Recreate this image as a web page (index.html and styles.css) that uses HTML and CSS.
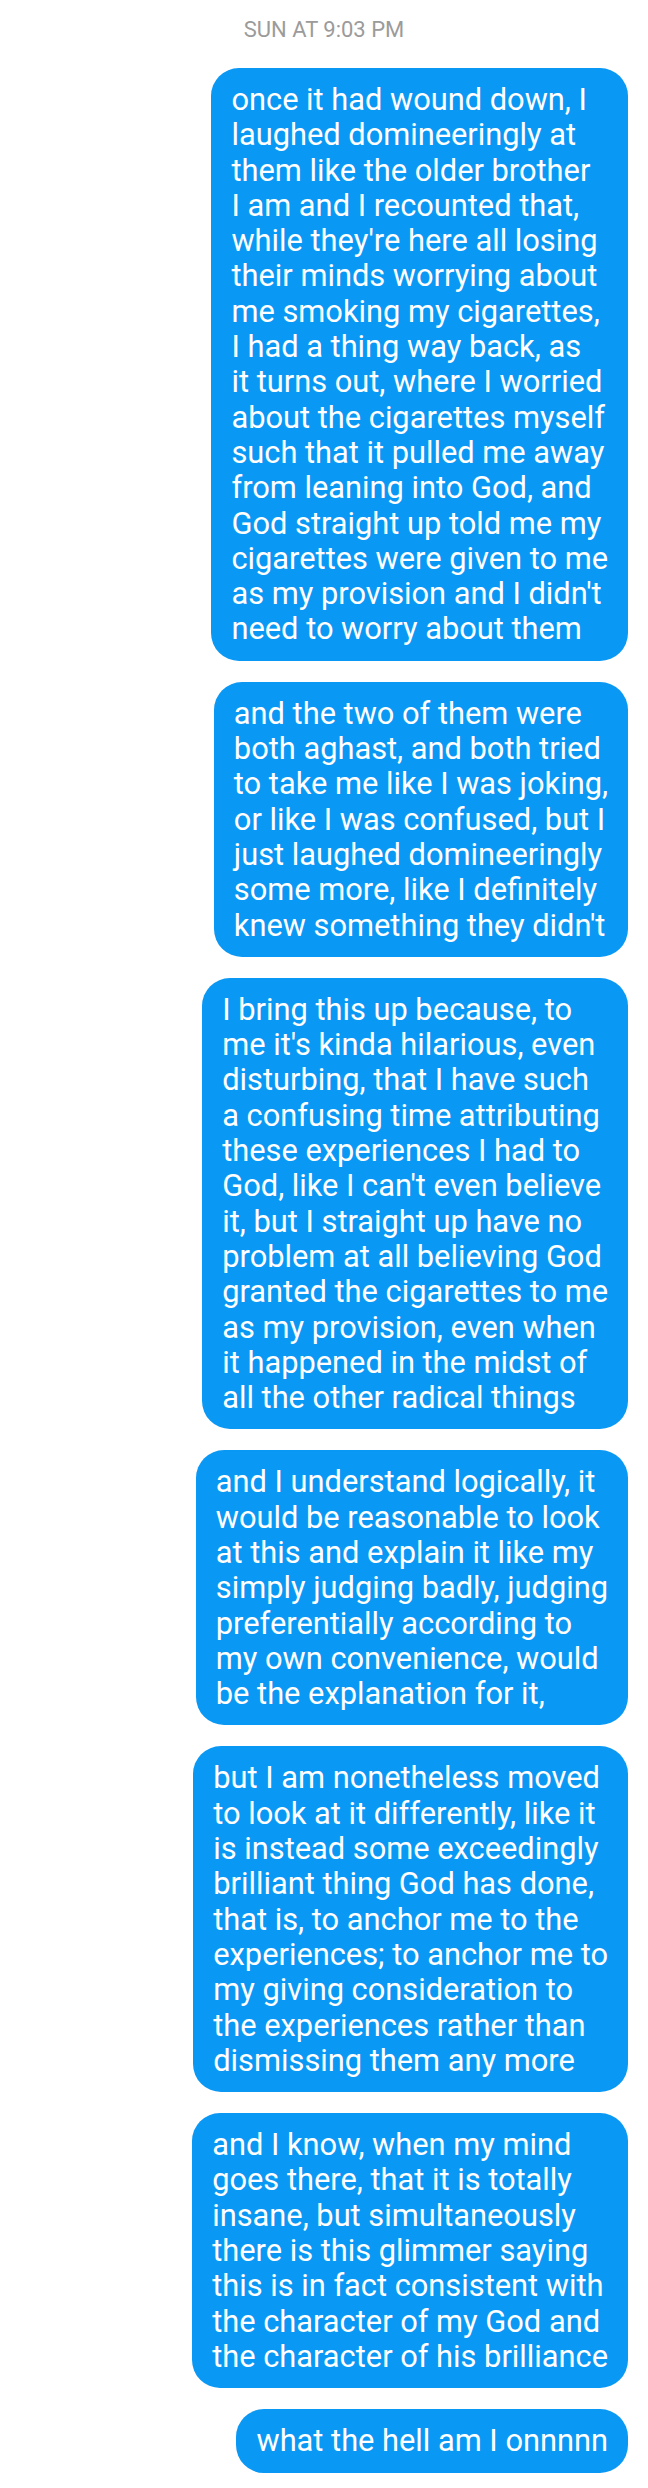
FILE: index.html
```html
<!DOCTYPE html>
<html lang="en">
<head>
<meta charset="utf-8">
<title>Messages</title>
<link rel="stylesheet" href="styles.css">
</head>
<body>
<main class="thread">
  <div class="timestamp">SUN AT 9:03 PM</div>
  <div class="messages">
    <div class="bubble">once it had wound down, I<br>laughed domineeringly at<br>them like the older brother<br>I am and I recounted that,<br>while they're here all losing<br>their minds worrying about<br>me smoking my cigarettes,<br>I had a thing way back, as<br>it turns out, where I worried<br>about the cigarettes myself<br>such that it pulled me away<br>from leaning into God, and<br>God straight up told me my<br>cigarettes were given to me<br>as my provision and I didn't<br>need to worry about them</div>
    <div class="bubble">and the two of them were<br>both aghast, and both tried<br>to take me like I was joking,<br>or like I was confused, but I<br>just laughed domineeringly<br>some more, like I definitely<br>knew something they didn't</div>
    <div class="bubble">I bring this up because, to<br>me it's kinda hilarious, even<br>disturbing, that I have such<br>a confusing time attributing<br>these experiences I had to<br>God, like I can't even believe<br>it, but I straight up have no<br>problem at all believing God<br>granted the cigarettes to me<br>as my provision, even when<br>it happened in the midst of<br>all the other radical things</div>
    <div class="bubble">and I understand logically, it<br>would be reasonable to look<br>at this and explain it like my<br>simply judging badly, judging<br>preferentially according to<br>my own convenience, would<br>be the explanation for it,</div>
    <div class="bubble">but I am nonetheless moved<br>to look at it differently, like it<br>is instead some exceedingly<br>brilliant thing God has done,<br>that is, to anchor me to the<br>experiences; to anchor me to<br>my giving consideration to<br>the experiences rather than<br>dismissing them any more</div>
    <div class="bubble">and I know, when my mind<br>goes there, that it is totally<br>insane, but simultaneously<br>there is this glimmer saying<br>this is in fact consistent with<br>the character of my God and<br>the character of his brilliance</div>
    <div class="bubble">what the hell am I onnnnn</div>
  </div>
</main>
</body>
</html>
```

FILE: styles.css
```css
html, body {
  margin: 0;
  padding: 0;
  background: #ffffff;
}

body {
  font-family: Roboto, "Noto Sans", "Liberation Sans", sans-serif;
  -webkit-font-smoothing: antialiased;
}

.thread {
  display: flex;
  flex-direction: column;
  padding: 17px 20px 16px 20px;
}

.timestamp {
  align-self: center;
  font-size: 22px;
  line-height: 26px;
  color: #9b9b9b;
  margin-bottom: 25px;
}

.messages {
  display: flex;
  flex-direction: column;
  align-items: flex-end;
  gap: 21px;
}

.bubble {
  background: #0a98f5;
  color: #ffffff;
  font-size: 30.8px;
  line-height: 35.3px;
  padding: 14px 20px;
  border-radius: 28px;
  white-space: nowrap;
}
```
